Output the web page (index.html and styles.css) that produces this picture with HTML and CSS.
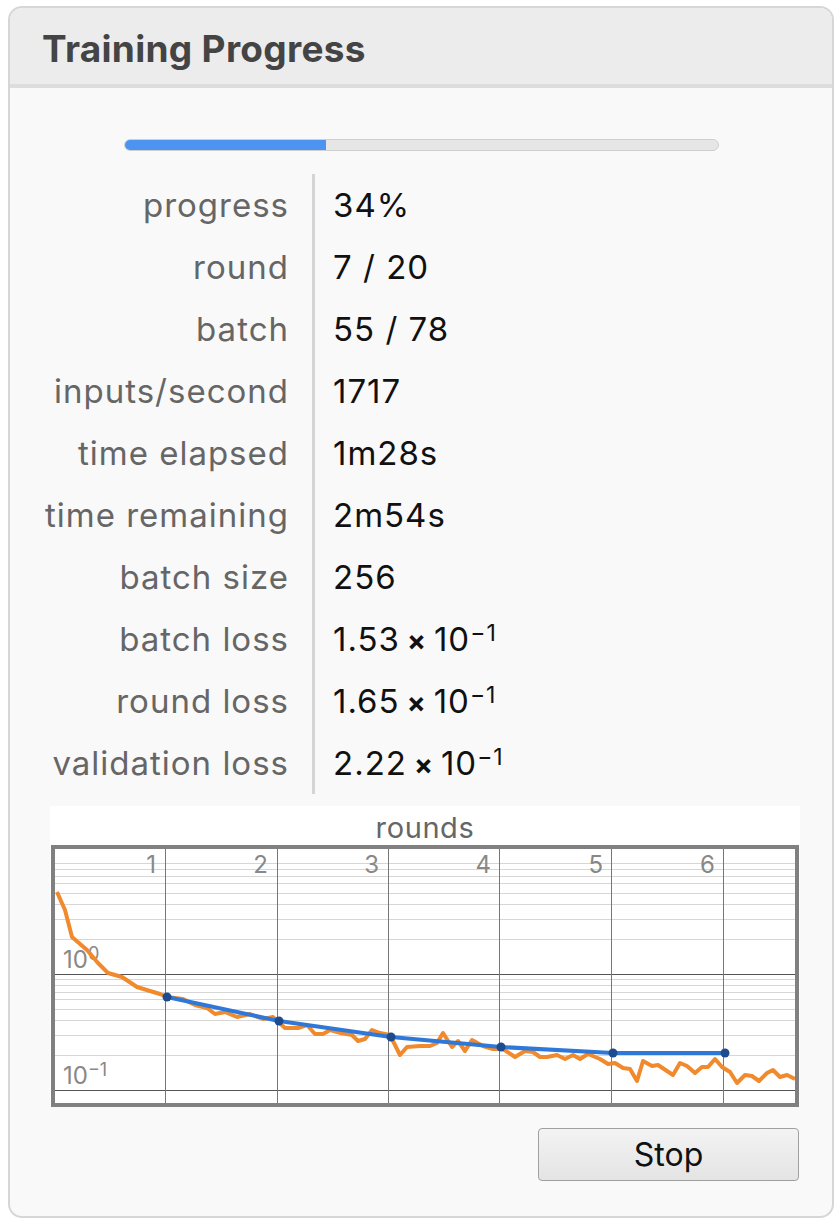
FILE: index.html
```html
<!DOCTYPE html>
<html lang="en">
<head>
    <meta charset="UTF-8">
    <title>Training Progress</title>
    <link rel="stylesheet" href="styles.css">
</head>
<body>
    <div class="panel">
        <div class="panel-header">
            <h1>Training Progress</h1>
        </div>
        <div class="panel-body">
            <div class="progress">
                <div class="progress-fill" style="width: 34%"></div>
            </div>

            <div class="stats">
                <div class="label">progress</div><div class="value">34%</div>
                <div class="label">round</div><div class="value">7 / 20</div>
                <div class="label">batch</div><div class="value">55 / 78</div>
                <div class="label">inputs/second</div><div class="value">1717</div>
                <div class="label">time elapsed</div><div class="value">1m28s</div>
                <div class="label">time remaining</div><div class="value">2m54s</div>
                <div class="label">batch size</div><div class="value">256</div>
                <div class="label">batch loss</div><div class="value">1.53<span class="times">×</span>10<span class="exp">−1</span></div>
                <div class="label">round loss</div><div class="value">1.65<span class="times">×</span>10<span class="exp">−1</span></div>
                <div class="label">validation loss</div><div class="value">2.22<span class="times">×</span>10<span class="exp">−1</span></div>
            </div>

            <div class="chart">
                <div class="chart-title">rounds</div>
                <div class="chart-frame">
                    <svg width="740" height="254" viewBox="55 849 740 254">
                        <!-- minor log grid -->
                        <g stroke="#d6d6d6" stroke-width="1">
                            <line x1="55" x2="795" y1="863.5" y2="863.5"/>
                            <line x1="55" x2="795" y1="869.5" y2="869.5"/>
                            <line x1="55" x2="795" y1="876.5" y2="876.5"/>
                            <line x1="55" x2="795" y1="883.5" y2="883.5"/>
                            <line x1="55" x2="795" y1="893.5" y2="893.5"/>
                            <line x1="55" x2="795" y1="904.5" y2="904.5"/>
                            <line x1="55" x2="795" y1="919.5" y2="919.5"/>
                            <line x1="55" x2="795" y1="939.5" y2="939.5"/>
                            <line x1="55" x2="795" y1="979.5" y2="979.5"/>
                            <line x1="55" x2="795" y1="985.5" y2="985.5"/>
                            <line x1="55" x2="795" y1="992.5" y2="992.5"/>
                            <line x1="55" x2="795" y1="999.5" y2="999.5"/>
                            <line x1="55" x2="795" y1="1009.5" y2="1009.5"/>
                            <line x1="55" x2="795" y1="1020.5" y2="1020.5"/>
                            <line x1="55" x2="795" y1="1035.5" y2="1035.5"/>
                            <line x1="55" x2="795" y1="1055.5" y2="1055.5"/>
                        </g>
                        <g stroke="#555" stroke-width="1">
                            <line x1="55" x2="795" y1="974.5" y2="974.5"/>
                            <line x1="55" x2="795" y1="1090.5" y2="1090.5"/>
                        </g>
                        <g stroke="#777" stroke-width="1">
                            <line x1="165.5" x2="165.5" y1="849" y2="1103"/>
                            <line x1="277.5" x2="277.5" y1="849" y2="1103"/>
                            <line x1="388.5" x2="388.5" y1="849" y2="1103"/>
                            <line x1="499.5" x2="499.5" y1="849" y2="1103"/>
                            <line x1="611.5" x2="611.5" y1="849" y2="1103"/>
                            <line x1="723.5" x2="723.5" y1="849" y2="1103"/>
                        </g>

                        <g class="tick" text-anchor="end">
                            <text x="156" y="873">1</text>
                            <text x="268" y="873">2</text>
                            <text x="379" y="873">3</text>
                            <text x="491" y="873">4</text>
                            <text x="603" y="873">5</text>
                            <text x="715" y="873">6</text>
                        </g>
                        <text class="tick" x="63" y="968">10<tspan class="tick-exp" dy="-8">0</tspan></text>
                        <text class="tick" x="63" y="1084">10<tspan class="tick-exp" dy="-8">−1</tspan></text>

                        <polyline class="batch-line" points="57,892 65,910 72,937 87,950 98,963 108,973 122,977 137,987 150,991 160,994 167,997 183,999 195,1005 207,1008 215,1014 225,1012 237,1017 250,1014 263,1019 273,1017 285,1028 298,1028 307,1025 315,1034 323,1034 330,1030 341,1033 352,1035 358,1041 365,1039 372,1030 380,1033 390,1035 400,1055 407,1047 420,1046 430,1046 437,1043 443,1033 452,1047 458,1041 465,1051 472,1040 483,1046 493,1049 503,1049 515,1057 525,1051 533,1052 540,1057 547,1057 557,1055 565,1059 573,1055 580,1059 588,1054 600,1059 608,1064 615,1063 623,1068 630,1069 637,1081 643,1061 652,1066 658,1065 667,1071 673,1075 680,1063 687,1066 695,1073 702,1067 708,1067 715,1059 722,1067 730,1072 737,1083 745,1075 752,1076 759,1081 767,1073 773,1070 780,1077 787,1075 795,1079"/>

                        <polyline class="round-line" points="167,997 279,1021 391,1037 501,1047 613,1053 725,1053"/>
                        <g class="round-dots">
                            <circle cx="167" cy="997" r="4.5"/>
                            <circle cx="279" cy="1021" r="4.5"/>
                            <circle cx="391" cy="1037" r="4.5"/>
                            <circle cx="501" cy="1047" r="4.5"/>
                            <circle cx="613" cy="1053" r="4.5"/>
                            <circle cx="725" cy="1053" r="4.5"/>
                        </g>
                    </svg>
                </div>
            </div>

            <div class="actions">
                <button class="stop">Stop</button>
            </div>
        </div>
    </div>
</body>
</html>
```

FILE: styles.css
```css
* {
    margin: 0;
    padding: 0;
    box-sizing: border-box;
}

body {
    background-color: #ffffff;
    font-family: Inter, "Liberation Sans", sans-serif;
}

.panel {
    width: 826px;
    margin: 6px 0 0 8px;
    border: 2px solid #d6d6d6;
    border-radius: 14px;
    background-color: #f9f9f9;
    overflow: hidden;
}

.panel-header {
    height: 80px;
    padding: 0 0 0 32px;
    background-color: #ececec;
    border-bottom: 4px solid #dddddd;
}

.panel-header h1 {
    font-size: 37px;
    font-weight: 700;
    color: #444;
    line-height: 76px;
    padding-top: 3px;
    letter-spacing: 0.3px;
}

.progress {
    width: 595px;
    height: 12px;
    margin: 51px auto 0;
    background-color: #e6e6e6;
    border: 1px solid #cfcfcf;
    border-radius: 6px;
    overflow: hidden;
}

.progress-fill {
    height: 100%;
    background-color: #4c94f0;
}

.stats {
    display: grid;
    grid-template-columns: 302px 1fr;
    margin-top: 23px;
}

.label,
.value {
    height: 62px;
    line-height: 62px;
    font-size: 33px;
    letter-spacing: 1px;
    white-space: nowrap;
}

.label {
    text-align: right;
    padding-right: 23px;
    color: #666;
}

.value {
    padding-left: 18px;
    border-left: 3px solid #d4d4d4;
    color: #111;
}

.times {
    font-size: 28px;
    font-weight: 700;
    margin: 0 7px 0 7px;
}

.exp {
    font-size: 23px;
    vertical-align: 10px;
    line-height: 0;
}

.chart {
    width: 750px;
    margin: 12px 0 0 40px;
    background-color: #ffffff;
}

.chart-title {
    height: 39px;
    line-height: 39px;
    text-align: center;
    font-size: 29px;
    letter-spacing: 0.6px;
    color: #666;
    padding-top: 2px;
}

.chart-frame {
    width: 748px;
    margin: 0 1px;
    border: 4px solid #808080;
    background-color: #fff;
}

.chart-frame svg {
    display: block;
}

.tick {
    font-family: Inter, "Liberation Sans", sans-serif;
    font-size: 24px;
    fill: #888;
}

.tick-exp {
    font-size: 18px;
}

.batch-line {
    fill: none;
    stroke: #f08a2c;
    stroke-width: 4;
    stroke-linejoin: round;
}

.round-line {
    fill: none;
    stroke: #2f78d8;
    stroke-width: 4;
    stroke-linejoin: round;
}

.round-dots circle {
    fill: #1d4c8e;
}

.actions {
    display: flex;
    justify-content: flex-end;
    padding: 21px 33px 35px 0;
}

.stop {
    width: 261px;
    height: 53px;
    font-family: Inter, "Liberation Sans", sans-serif;
    font-size: 32px;
    color: #111;
    border: 1px solid #a0a0a0;
    border-radius: 4px;
    background: linear-gradient(#f3f3f3, #e4e4e4);
    cursor: pointer;
}
```
